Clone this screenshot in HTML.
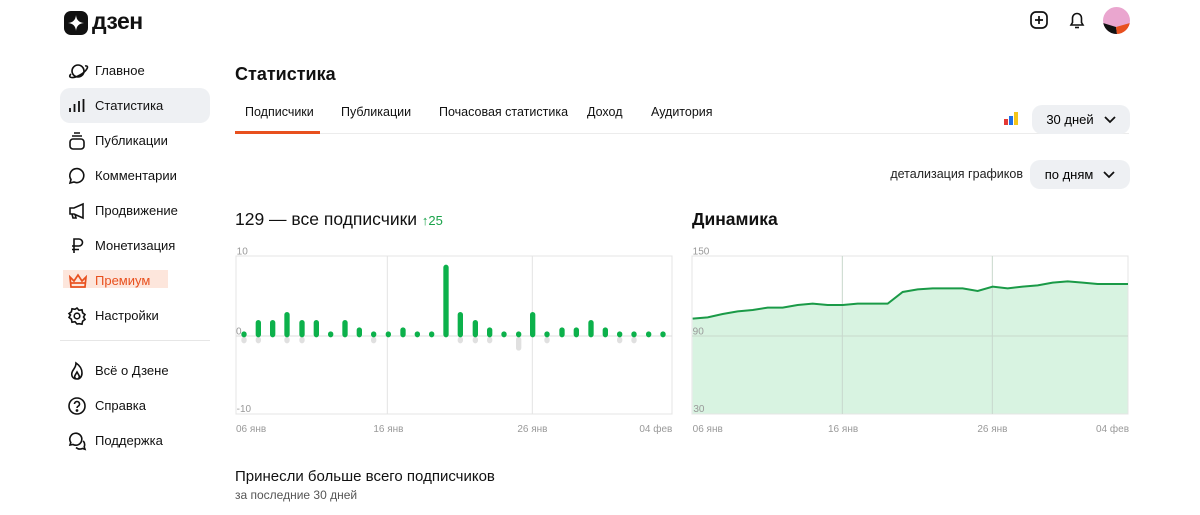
<!DOCTYPE html>
<html><head><meta charset="utf-8"><style>
*{margin:0;padding:0;box-sizing:border-box}
body{width:1200px;height:515px;overflow:hidden;background:#fff;font-family:"Liberation Sans","DejaVu Sans",sans-serif;color:#000;position:relative}
.a{position:absolute}
.nav{position:absolute;left:60px;width:150px;height:35px;display:flex;align-items:center;font-size:13px;color:#111}
.nav svg{position:absolute;left:7px}
.nav span{position:absolute;left:35px}
.tab{position:absolute;top:105px;font-size:12.5px;color:#111;white-space:nowrap}
.btn{position:absolute;background:#eef0f3;border-radius:10px;font-size:13px;display:flex;align-items:center;justify-content:center;gap:10px}
.lbl{font-size:10px;fill:#999;font-family:"Liberation Sans",sans-serif}
</style></head><body>
<div class="a" style="left:64px;top:11px;width:24px;height:24px;background:#111;border-radius:7px"></div>
<svg class="a" style="left:64px;top:11px" width="24" height="24" viewBox="0 0 24 24"><path d="M12 4 Q12.6 11.4 20 12 Q12.6 12.6 12 20 Q11.4 12.6 4 12 Q11.4 11.4 12 4Z" fill="#fff"/></svg>
<div class="a" style="left:92px;top:8px;font-size:23px;font-weight:bold;letter-spacing:-0.5px;color:#111">дзен</div>
<svg class="a" style="left:1029px;top:10px" width="20" height="20" viewBox="0 0 20 20" fill="none" stroke="#111" stroke-width="1.7"><rect x="2" y="2" width="16" height="16" rx="5"/><path d="M10 6v8M6 10h8"/></svg>
<svg class="a" style="left:1067px;top:10px" width="20" height="20" viewBox="0 0 20 20" fill="none" stroke="#111" stroke-width="1.6"><path d="M4 15h12l-1.5-2.5V8a4.5 4.5 0 0 0-9 0v4.5z"/><path d="M8 17.5h4"/></svg>
<svg class="a" style="left:1103px;top:7px" width="27" height="27" viewBox="0 0 27 27"><clipPath id="c"><circle cx="13.5" cy="13.5" r="13.5"/></clipPath><g clip-path="url(#c)"><rect width="27" height="27" fill="#eaa6cf"/><path d="M0 16 L13 20 L14 27 L0 27Z" fill="#111"/><path d="M13 20 L27 16 L27 27 L14 27Z" fill="#e8501e"/></g></svg>
<div class="a" style="left:60px;top:88px;width:150px;height:35px;background:#eef0f3;border-radius:10px"></div>
<div class="a" style="left:63px;top:270px;width:105px;height:18px;background:#fde6dc"></div>
<div class="nav" style="top:53px"><svg width="22" height="20" viewBox="0 0 22 20" fill="none" stroke="#111" stroke-width="1.6"><circle cx="11" cy="10" r="6"/><path d="M4 13c-4 4 2 5 9 1s10-10 5-9"/></svg><span>Главное</span></div>
<div class="nav" style="top:88px"><svg width="20" height="20" viewBox="0 0 20 20" stroke="#111" stroke-width="1.8"><path d="M3 16v-4M7.5 16V8M12 16V5M16.5 16V3"/></svg><span>Статистика</span></div>
<div class="nav" style="top:123px"><svg width="20" height="20" viewBox="0 0 20 20" fill="none" stroke="#111" stroke-width="1.6"><path d="M7 2h6M5 5h10"/><rect x="3" y="8" width="14" height="10" rx="3"/></svg><span>Публикации</span></div>
<div class="nav" style="top:158px"><svg width="20" height="20" viewBox="0 0 20 20" fill="none" stroke="#111" stroke-width="1.6"><path d="M3 17l1-3.5A7 7 0 1 1 7 16z"/></svg><span>Комментарии</span></div>
<div class="nav" style="top:193px"><svg width="20" height="20" viewBox="0 0 20 20" fill="none" stroke="#111" stroke-width="1.6"><path d="M3 7h4l9-4v14l-9-4H3zM5 13l1 4h3l-1-4"/></svg><span>Продвижение</span></div>
<div class="nav" style="top:228px"><svg width="20" height="20" viewBox="0 0 20 20" fill="none" stroke="#111" stroke-width="1.6"><path d="M7 17V3h5a3.5 3.5 0 0 1 0 7H5M5 13.5h7"/></svg><span>Монетизация</span></div>
<div class="nav" style="top:263px;color:#e8501e"><svg width="22" height="20" viewBox="0 0 22 20" fill="none" stroke="#e8501e" stroke-width="1.7"><path d="M3 6l4 4 4-6 4 6 4-4-1 10H4z"/><path d="M4 12h14"/></svg><span>Премиум</span></div>
<div class="nav" style="top:298px"><svg width="20" height="20" viewBox="0 0 20 20" fill="none" stroke="#111" stroke-width="1.6"><circle cx="10" cy="10" r="2.8"/><path d="M10 2l2 2.3 3-.5.6 3 2.4 1.8-1.5 2.4 1.5 2.4-2.4 1.8-.6 3-3-.5L10 18l-2-2.3-3 .5-.6-3L2 11.4 3.5 9 2 7.6l2.4-1.8.6-3 3 .5z"/></svg><span>Настройки</span></div>
<div class="a" style="left:60px;top:340px;width:150px;height:1px;background:#e6e6e6"></div>
<div class="nav" style="top:353px"><svg width="20" height="20" viewBox="0 0 20 20" fill="none" stroke="#111" stroke-width="1.6"><path d="M10 18c-4 0-6-3-5-6.5C6 8 9 7 9 2c3 2 6 5 6 10 0 3.5-2 6-5 6zM10 18c-1.5 0-3-1.5-2-3.5L10 11l2 3.5c1 2-.5 3.5-2 3.5z"/></svg><span>Всё о Дзене</span></div>
<div class="nav" style="top:388px"><svg width="20" height="20" viewBox="0 0 20 20" fill="none" stroke="#111" stroke-width="1.6"><circle cx="10" cy="10" r="8"/><path d="M7.5 8a2.5 2.5 0 1 1 3.5 2.3c-.7.4-1 .9-1 1.7"/><circle cx="10" cy="14.5" r=".6" fill="#111"/></svg><span>Справка</span></div>
<div class="nav" style="top:423px"><svg width="20" height="20" viewBox="0 0 20 20" fill="none" stroke="#111" stroke-width="1.6"><path d="M3 14l.8-2.5A6 6 0 1 1 6 13.5z"/><path d="M9 16.5a6 6 0 0 0 6.5 1l2.5.8-.8-2.4a6 6 0 0 0-1-6"/></svg><span>Поддержка</span></div>
<div class="a" style="left:235px;top:64px;font-size:18px;font-weight:bold;color:#111">Статистика</div>
<div class="tab" style="left:245px">Подписчики</div>
<div class="tab" style="left:341px">Публикации</div>
<div class="tab" style="left:439px">Почасовая статистика</div>
<div class="tab" style="left:587px">Доход</div>
<div class="tab" style="left:651px">Аудитория</div>
<div class="a" style="left:235px;top:133px;width:894px;height:1px;background:#ececec"></div>
<div class="a" style="left:235px;top:131px;width:85px;height:3px;background:#e8501e"></div>
<svg class="a" style="left:1004px;top:112px" width="15" height="14"><rect x="0" y="7" width="4" height="6" fill="#e53935"/><rect x="5" y="4" width="4" height="9" fill="#1e6fe8"/><rect x="10" y="0" width="4" height="13" fill="#f5c518"/></svg>
<div class="btn" style="left:1032px;top:105px;width:98px;height:29px">30 дней <svg width="12" height="8" viewBox="0 0 12 8" fill="none" stroke="#111" stroke-width="1.8"><path d="M1 1l5 5 5-5"/></svg></div>
<div class="a" style="right:177px;top:167px;font-size:12.5px;color:#222;white-space:nowrap">детализация графиков</div>
<div class="btn" style="left:1030px;top:160px;width:100px;height:29px">по дням <svg width="12" height="8" viewBox="0 0 12 8" fill="none" stroke="#111" stroke-width="1.8"><path d="M1 1l5 5 5-5"/></svg></div>
<div class="a" style="left:235px;top:209px;font-size:17.5px;color:#111">129 — все подписчики <span style="font-size:13px;color:#1aa34a">↑25</span></div>
<div class="a" style="left:692px;top:209px;font-size:17.5px;font-weight:bold;color:#111">Динамика</div>
<svg class="a" style="left:230px;top:240px" width="450" height="200" viewBox="0 0 1350 600">
<rect x="18" y="48" width="1308" height="474" fill="none" stroke="#e4e4e4" stroke-width="3"/>
<path d="M472 48V522M907 48V522" stroke="#e4e4e4" stroke-width="3"/>
<path d="M18 288H1326" stroke="#ddd" stroke-width="3"/>
<g stroke="#e0e0e0" stroke-width="16" stroke-linecap="round">
<path d="M42 298V302M85 298V302M171 298V302M216 298V302M431 298V302M691 298V302M736 298V302M779 298V302M866 298V324M951 298V302M1169 298V302M1212 298V302"/></g>
<text class="lbl" x="20" y="43" style="font-size:30px">10</text>
<text class="lbl" x="18" y="283" style="font-size:30px">0</text>
<text class="lbl" x="20" y="516" style="font-size:30px">-10</text>
<text class="lbl" x="18" y="576" style="font-size:30px">06 янв</text>
<text class="lbl" x="430" y="576" style="font-size:30px">16 янв</text>
<text class="lbl" x="862" y="576" style="font-size:30px">26 янв</text>
<text class="lbl" x="1228" y="576" style="font-size:30px">04 фев</text>
<g stroke="#0cb14b" stroke-width="16" stroke-linecap="round">
<path d="M42 282V284M85 248V284M128 248V284M171 224V284M216 248V284M259 248V284M302 282V284M345 248V284M388 270V284M431 282V284M475 282V284M519 270V284M562 282V284M605 282V284M648 82V284M691 224V284M736 248V284M779 270V284M822 282V284M866 282V284M908 224V284M951 282V284M996 270V284M1039 270V284M1083 248V284M1126 270V284M1169 282V284M1212 282V284M1256 282V284M1299 282V284"/></g>
</svg>
<svg class="a" style="left:686px;top:240px" width="450" height="200" viewBox="0 0 1350 600">
<path d="M20 236L65 232L110 222L155 214L200 210L245 203L290 203L335 195L380 191L425 195L470 195L515 191L560 191L605 191L650 156L695 148L740 145L785 145L830 145L875 153L920 140L965 145L1010 140L1055 136L1100 128L1145 124L1190 128L1235 132L1280 132L1326 132V522H20Z" fill="#d8f3e1"/>
<rect x="18" y="48" width="1308" height="474" fill="none" stroke="#e4e4e4" stroke-width="3"/>
<path d="M469 48V522M919 48V522M18 288H1326" stroke="#c8d8cc" stroke-width="3"/>
<path d="M20 236L65 232L110 222L155 214L200 210L245 203L290 203L335 195L380 191L425 195L470 195L515 191L560 191L605 191L650 156L695 148L740 145L785 145L830 145L875 153L920 140L965 145L1010 140L1055 136L1100 128L1145 124L1190 128L1235 132L1280 132L1326 132" fill="none" stroke="#1a9a47" stroke-width="6"/>
<text class="lbl" x="20" y="43" style="font-size:30px">150</text>
<text class="lbl" x="20" y="283" style="font-size:30px">90</text>
<text class="lbl" x="22" y="516" style="font-size:30px">30</text>
<text class="lbl" x="20" y="576" style="font-size:30px">06 янв</text>
<text class="lbl" x="426" y="576" style="font-size:30px">16 янв</text>
<text class="lbl" x="874" y="576" style="font-size:30px">26 янв</text>
<text class="lbl" x="1230" y="576" style="font-size:30px">04 фев</text>
</svg>
<div class="a" style="left:235px;top:468px;font-size:15px;color:#111">Принесли больше всего подписчиков</div>
<div class="a" style="left:235px;top:488px;font-size:12px;color:#555">за последние 30 дней</div>
</body></html>
